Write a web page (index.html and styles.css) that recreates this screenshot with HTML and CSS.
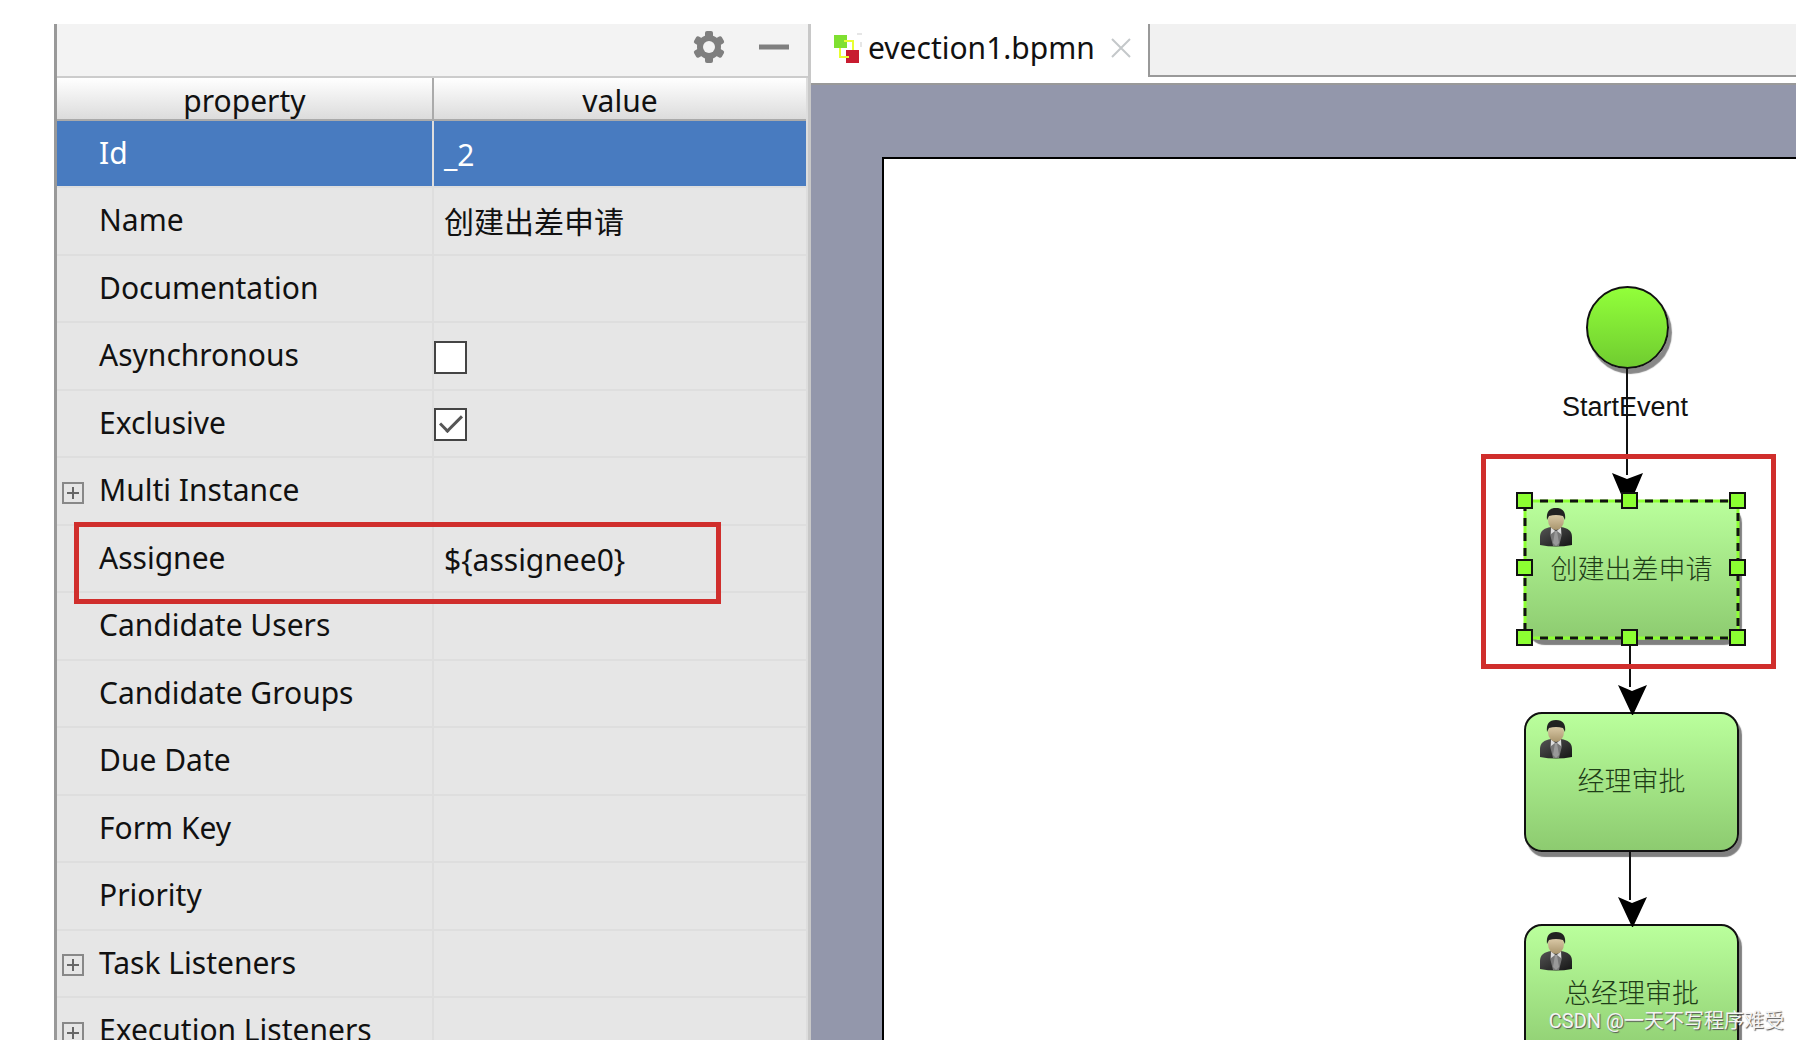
FILE: index.html
```html
<!DOCTYPE html>
<html lang="zh">
<head>
    <meta charset="UTF-8">
    <title>evection1.bpmn</title>
    <link rel="stylesheet" href="styles.css">
</head>
<body>
    <svg class="defs" aria-hidden="true">
        <defs>
            <linearGradient id="face" x1="0" y1="0" x2="0" y2="1">
                <stop offset="0" stop-color="#e9d9b8"/>
                <stop offset="1" stop-color="#a8946c"/>
            </linearGradient>
            <linearGradient id="suit" x1="0" y1="0" x2="1" y2="1">
                <stop offset="0" stop-color="#555"/>
                <stop offset="1" stop-color="#151515"/>
            </linearGradient>
            <symbol id="user" viewBox="0 0 34 40">
                <path d="M1 38V30C1 24 5 21 12 20H22C29 21 33 24 33 30V38Q17 41 1 38Z" fill="url(#suit)"/>
                <path d="M12 20L17 24L22 20L23 27L20 39H14L11 27Z" fill="#777"/>
                <path d="M12 20L16 24L12 27ZM22 20L18 24L22 27Z" fill="#ddd"/>
                <path d="M16 24H18L20 36L17 39L14 36Z" fill="#999"/>
                <ellipse cx="17" cy="13" rx="8" ry="10" fill="url(#face)"/>
                <path d="M8 13C7 5 10 1 17 1C24 1 27 5 26 13L24 9Q17 7 10 9Z" fill="#222"/>
            </symbol>
        </defs>
    </svg>
    <div class="window">
        <div class="panel">
            <div class="toolbar">
                <button type="button" aria-label="Settings">
                    <svg width="32" height="34" viewBox="0 0 32 34">
                        <g fill="#7f7f7f">
                            <circle cx="16" cy="17" r="12"/>
                            <rect x="12" y="1" width="8" height="32" rx="2"/>
                            <rect x="12" y="1" width="8" height="32" rx="2" transform="rotate(60 16 17)"/>
                            <rect x="12" y="1" width="8" height="32" rx="2" transform="rotate(120 16 17)"/>
                        </g>
                        <circle cx="16" cy="17" r="6" fill="#f3f3f3"/>
                    </svg>
                </button>
                <button type="button" aria-label="Hide">
                    <svg width="30" height="34" viewBox="0 0 30 34"><path d="M0 17H30" stroke="#7f7f7f" stroke-width="5"/></svg>
                </button>
            </div>
            <table class="props">
                <thead>
                    <tr><th class="key">property</th><th>value</th></tr>
                </thead>
                <tbody>
                    <tr class="selected"><td>Id</td><td>_2</td></tr>
                    <tr><td>Name</td><td>创建出差申请</td></tr>
                    <tr><td>Documentation</td><td></td></tr>
                    <tr><td><label for="async">Asynchronous</label></td><td class="check"><input type="checkbox" id="async"></td></tr>
                    <tr><td><label for="excl">Exclusive</label></td><td class="check"><input type="checkbox" id="excl" checked></td></tr>
                    <tr><td class="group"><button type="button" class="plus" aria-label="Expand"></button>Multi Instance</td><td></td></tr>
                    <tr><td class="marked">Assignee</td><td>${assignee0}</td></tr>
                    <tr><td>Candidate Users</td><td></td></tr>
                    <tr><td>Candidate Groups</td><td></td></tr>
                    <tr><td>Due Date</td><td></td></tr>
                    <tr><td>Form Key</td><td></td></tr>
                    <tr><td>Priority</td><td></td></tr>
                    <tr><td class="group"><button type="button" class="plus" aria-label="Expand"></button>Task Listeners</td><td></td></tr>
                    <tr><td class="group"><button type="button" class="plus" aria-label="Expand"></button>Execution Listeners</td><td></td></tr>
                </tbody>
            </table>
        </div>
        <div class="editor">
            <div class="tabs">
                <div class="tab">
                    <svg width="30" height="34" viewBox="0 0 30 34">
                        <rect x="2" y="4" width="13" height="13" fill="#7fe030"/>
                        <rect x="14" y="19" width="13" height="13" fill="#c81c30"/>
                        <path d="M12 10H21V19M8 17V26H17" fill="none" stroke="#e8ff30" stroke-width="2"/>
                        <path d="M25 3H30M29 11V16" stroke="#e6e6e6" stroke-width="2"/>
                    </svg>
                    <span>evection1.bpmn</span>
                    <button type="button" aria-label="Close">
                        <svg width="20" height="20" viewBox="0 0 20 20"><path d="M1 1L19 19M19 1L1 19" stroke="#c4c8ca" stroke-width="2"/></svg>
                    </button>
                </div>
                <div class="rest"></div>
            </div>
            <div class="canvas">
                <div class="page">
                    <div class="start"></div>
                    <div class="caption">StartEvent</div>
                    <div class="node node1 active"><svg class="user"><use href="#user"/></svg>创建出差申请</div>
                    <div class="node node2"><svg class="user"><use href="#user"/></svg>经理审批</div>
                    <div class="node node3"><svg class="user"><use href="#user"/></svg>总经理审批</div>
                    <svg class="edges" width="914" height="881" viewBox="0 0 914 881">
                        <g stroke="#111" stroke-width="2">
                            <path d="M743 209V316M746 483V528M746 693V741"/>
                        </g>
                        <path d="M728 314L743 320L759 314L745 347H742Z"/>
                        <path d="M734 526L748 532L763 526L749 556H748Z"/>
                        <path d="M734 738L748 744L763 738L749 768H748Z"/>
                        <!-- selection outline and its handles -->
                        <rect x="641" y="342" width="213" height="137" fill="none" stroke="#8cff32" stroke-width="3"/>
                        <rect x="641" y="342" width="213" height="137" fill="none" stroke="#111" stroke-width="3" stroke-dasharray="8 7"/>
                        <g fill="#8cff32" stroke="#111" stroke-width="2">
                            <rect x="633" y="334" width="15" height="15"/>
                            <rect x="738" y="334" width="15" height="15"/>
                            <rect x="846" y="334" width="15" height="15"/>
                            <rect x="633" y="401" width="15" height="15"/>
                            <rect x="846" y="401" width="15" height="15"/>
                            <rect x="633" y="471" width="15" height="15"/>
                            <rect x="738" y="471" width="15" height="15"/>
                            <rect x="846" y="471" width="15" height="15"/>
                        </g>
                    </svg>
                    <div class="frame"></div>
                </div>
            </div>
        </div>
    </div>
    <div class="watermark">CSDN @一天不写程序难受</div>
</body>
</html>
```
FILE: styles.css
```css
*,*::after{
    box-sizing:border-box;
    margin:0;
    padding:0;
}
body{
    height:100vh;
    overflow:hidden;
    background:#fff;
    color:#111;
    font:30px/36px "Noto Sans","Noto Sans CJK SC",sans-serif;
}
button{
    display:flex;
    border:0;
    background:none;
}
.defs{
    position:absolute;
    width:0;
    height:0;
}
.window{
    display:flex;
    height:100vh;
    padding:24px 2px 0 54px;
}
.panel{
    flex:0 0 757px;
    overflow:hidden;
    border-left:3px solid #999;
    border-right:3px solid #c8c8c8;
    background:#e6e6e6;
}
.toolbar{
    display:flex;
    justify-content:flex-end;
    gap:34px;
    height:54px;
    padding:6px 19px 0 0;
    background:#f3f3f3;
    border-bottom:2px solid #ccc;
}
.props{
    width:100%;
    border-collapse:separate;
    border-spacing:0;
    table-layout:fixed;
    border-right:2px solid #ddd;
}
.props th{
    height:43px;
    padding-top:4px;
    font-weight:normal;
    border-bottom:2px solid #aaa;
    background:linear-gradient(#fff,#dcdcdc);
}
.props .key{
    width:377px;
    border-right:2px solid #aaa;
}
.props td{
    height:67px;
    padding:2px 10px 0;
    border-bottom:2px solid #dedede;
    white-space:nowrap;
}
.props tr:nth-child(even) td{
    height:68px;
}
.props td:first-child{
    padding:0 0 2px 42px;
    border-right:2px solid #dedede;
}
.props .selected td{
    background:#487bc0;
    color:#fff;
}
.props td.check{
    padding:2px 0 0;
}
.check input{
    display:block;
    appearance:none;
    width:33px;
    height:33px;
    border:2px solid #444;
    background:#fff;
}
.check input:checked{
    position:relative;
}
.check input:checked::after{
    content:"";
    position:absolute;
    left:4px;
    top:5px;
    width:22px;
    height:12px;
    border-left:3px solid #555;
    border-bottom:3px solid #555;
    transform:rotate(-45deg);
}
.props td.group{
    padding-left:5px;
}
.group .plus{
    display:inline-block;
    vertical-align:middle;
    width:22px;
    height:22px;
    margin-right:15px;
    border:2px solid #888;
    background:linear-gradient(#666,#666) no-repeat center/12px 2px,linear-gradient(#666,#666) no-repeat center/2px 12px;
}
.marked{
    position:relative;
}
.marked::after{
    content:"";
    position:absolute;
    z-index:1;
    left:17px;
    top:-4px;
    width:647px;
    height:82px;
    border:5px solid #d02e2c;
}
.editor{
    flex:1;
    display:flex;
    flex-direction:column;
    min-width:0;
}
.tabs{
    display:flex;
    height:61px;
    border-bottom:2px solid #999;
}
.tab{
    display:flex;
    align-items:center;
    gap:6px;
    padding:0 17px 12px 21px;
}
.tab button{
    margin-left:10px;
}
.rest{
    flex:1;
    height:53px;
    border-left:2px solid #999;
    border-bottom:2px solid #999;
    background:#f1f1f1;
}
.canvas{
    flex:1;
    min-height:0;
    padding:72px 0 0 71px;
    overflow:hidden;
    background:#9397ab;
}
.page{
    position:relative;
    height:100%;
    border:2px solid #000;
    border-width:2px 0 0 2px;
    background:#fff;
}
.edges{
    position:absolute;
    left:0;
    top:0;
}
.start{
    position:absolute;
    left:702px;
    top:127px;
    width:83px;
    height:83px;
    border:2px solid #111;
    border-radius:50%;
    background:linear-gradient(#92ff3a,#70cc30);
    box-shadow:3px 5px 1px #888;
}
.caption{
    position:absolute;
    left:678px;
    top:230px;
    font-family:"Liberation Sans",sans-serif;
    font-size:27px;
}
.node{
    position:absolute;
    left:640px;
    width:215px;
    height:140px;
    border:2px solid #111;
    border-radius:18px;
    background:linear-gradient(#baff9c,#8dcb70);
    box-shadow:3px 5px 1px #808080;
    color:#1f3d18;
    font-family:"Noto Sans CJK SC",sans-serif;
    font-weight:300;
    font-size:27px;
    line-height:132px;
    text-align:center;
}
.node1{
    top:341px;
}
.node2{
    top:553px;
}
.node3{
    top:765px;
}
.active{
    border-color:transparent;
    background-origin:border-box;
}
.user{
    position:absolute;
    left:13px;
    top:5px;
    width:34px;
    height:40px;
}
.frame{
    position:absolute;
    left:597px;
    top:295px;
    width:295px;
    height:215px;
    border:5px solid #d02e2c;
}
.watermark{
    position:absolute;
    right:14px;
    bottom:4px;
    color:#f4f4f4;
    font-family:Roboto,"Noto Sans CJK SC",sans-serif;
    font-size:20px;
    line-height:30px;
    text-shadow:1px 1px 1px #555;
}
```
